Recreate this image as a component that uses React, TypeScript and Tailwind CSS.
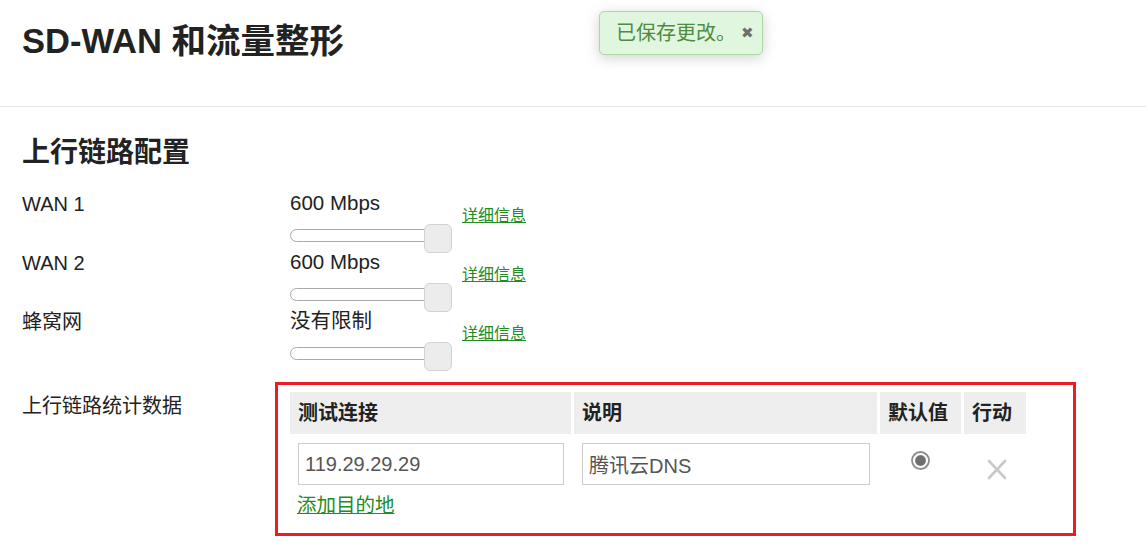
import React from "react";

const font = "font-['Liberation_Sans','Noto_Sans_CJK_SC',sans-serif]";

const uplinks = [
  { name: "WAN 1", value: "600 Mbps" },
  { name: "WAN 2", value: "600 Mbps" },
  { name: "蜂窝网", value: "没有限制" },
];

function Slider() {
  return (
    <div className="relative w-[162px] h-[37px]">
      <div className="absolute left-0 top-[15px] w-[150px] h-[13px] rounded-full border-[1.5px] border-[#a9a9a9] bg-white" />
      <div className="absolute left-[134px] top-[10px] w-[28px] h-[29px] rounded-[6px] border border-[#d2d2d2] bg-[#ececec]" />
    </div>
  );
}

function UplinkRow({ name, value }: { name: string; value: string }) {
  return (
    <div className="flex h-[59px]">
      <div className="w-[268px] pt-[1px] text-[20px] leading-[22px]">{name}</div>
      <div className="flex flex-col">
        <div className="text-[20.5px] leading-[22px]">{value}</div>
        <Slider />
      </div>
      <div className="pl-[10px] pt-[12px]">
        <a href="#" className="text-[16px] leading-[19px] text-[#238c23] underline">
          详细信息
        </a>
      </div>
    </div>
  );
}

function Radio() {
  return (
    <svg width="19" height="19" viewBox="0 0 19 19">
      <circle cx="9.5" cy="9.5" r="8.5" fill="white" stroke="#8c8c8c" strokeWidth="1.8" />
      <circle cx="9.5" cy="9.5" r="5.4" fill="#707070" />
    </svg>
  );
}

function RemoveIcon() {
  return (
    <svg width="20" height="21" viewBox="0 0 20 21">
      <path d="M2 2 L18 19 M18 2 L2 19" stroke="#c9c9c9" strokeWidth="2.6" strokeLinecap="round" />
    </svg>
  );
}

export default function App() {
  return (
    <div className={`${font} relative min-h-[545px] bg-white text-[#222]`}>
      <div className="h-[107px] border-b border-[#e6e6e6] px-[22px] pt-[21px]">
        <h1 className="text-[34.5px] leading-[41px] font-bold">SD-WAN 和流量整形</h1>
      </div>

      <div className="px-[22px]">
        <h2 className="mt-[29px] text-[28px] leading-[34px] font-bold">上行链路配置</h2>

        <div className="mt-[22px]">
          {uplinks.map((u) => (
            <UplinkRow key={u.name} name={u.name} value={u.value} />
          ))}
        </div>

        <div className="mt-[13px] flex items-start">
          <div className="w-[253px] pt-[13px] text-[20px] leading-[22px]">上行链路统计数据</div>
          <div className="w-[801px] h-[154px] border-[3px] border-[#ec1c24] pl-[12px] pt-[7px]">
            <div className="flex gap-[3px] h-[42px] text-[20px] font-bold">
              <div className="w-[281px] bg-[#eeeeee] pl-[8px] flex items-center">测试连接</div>
              <div className="w-[303px] bg-[#eeeeee] pl-[8px] flex items-center">说明</div>
              <div className="w-[81px] bg-[#eeeeee] pl-[8px] flex items-center">默认值</div>
              <div className="w-[62px] bg-[#eeeeee] pl-[8px] flex items-center">行动</div>
            </div>

            <div className="flex gap-[3px] mt-[9px] h-[42px]">
              <div className="w-[281px] pl-[8px]">
                <input
                  readOnly
                  value="119.29.29.29"
                  className="w-[266px] h-[42px] border border-[#cccccc] px-[6px] text-[20px] text-[#555] outline-none"
                />
              </div>
              <div className="w-[303px] pl-[8px]">
                <input
                  readOnly
                  value="腾讯云DNS"
                  className="w-[288px] h-[42px] border border-[#cccccc] px-[6px] text-[20px] text-[#555] outline-none"
                />
              </div>
              <div className="w-[81px] flex justify-center pt-[8px]">
                <Radio />
              </div>
              <div className="w-[62px] flex justify-center pt-[16px] pl-[3px]">
                <RemoveIcon />
              </div>
            </div>

            <div className="mt-[9px] pl-[7px]">
              <a href="#" className="text-[19.5px] leading-[22px] text-[#238c23] underline">
                添加目的地
              </a>
            </div>
          </div>
        </div>
      </div>

      <div className="absolute left-[599px] top-[11px] w-[164px] h-[44px] rounded-[5px] border border-[#a8d8a6] bg-[#e0f6df] shadow-[0_3px_14px_rgba(0,0,0,0.18)] flex items-center pl-[16px]">
        <span className="text-[20px] text-[#4f8c3f]">已保存更改。</span>
        <span className="ml-[5px] font-['DejaVu_Sans',sans-serif] text-[15px] text-[#6e6e6e]">✖</span>
      </div>
    </div>
  );
}
